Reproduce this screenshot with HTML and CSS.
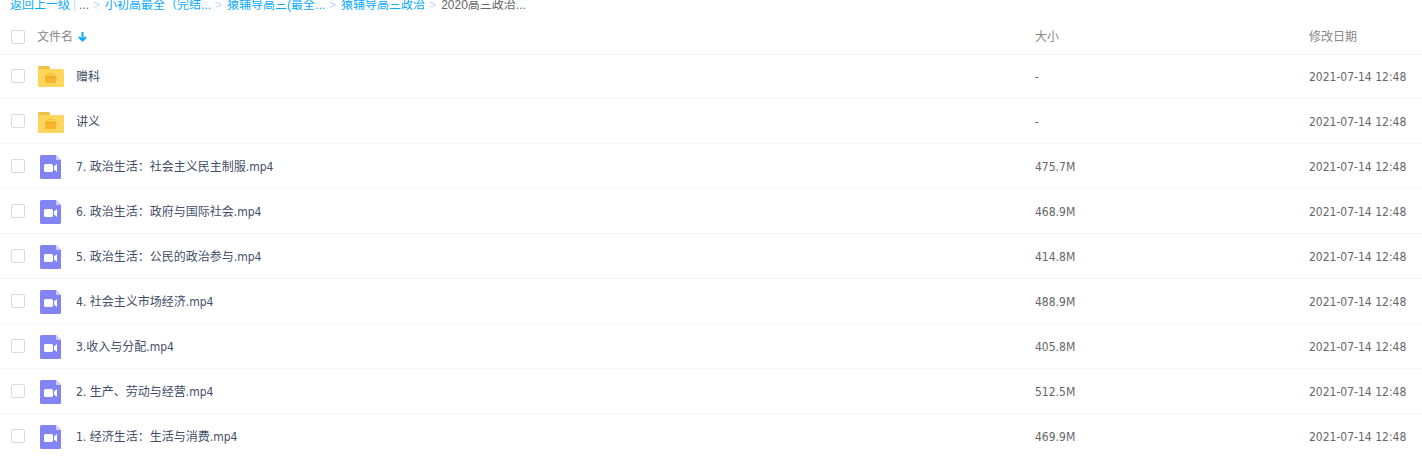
FILE: index.html
```html
<!DOCTYPE html>
<html lang="zh-CN">
<head>
    <meta charset="UTF-8">
    <meta name="viewport" content="width=device-width, initial-scale=1.0">
    <title>2020高三政治</title>
    <link rel="stylesheet" href="styles.css">
</head>
<body>
    <!-- Icon shapes shared by the rows -->
    <svg class="icon-defs" width="0" height="0" aria-hidden="true">
        <symbol id="icon-folder" viewBox="0 0 26 21">
            <path fill="#eebe47" d="M0 1.5Q0 0 1.5 0H10.5Q12 0 12 1.5V5H0z"/>
            <path fill="#ffd65c" d="M0 3H24.5Q26 3 26 4.5V19.5Q26 21 24.5 21H1.5Q0 21 0 19.5z"/>
            <path fill="none" stroke="#f6b62e" d="M9.5 9.500V8.500Q9.500 7.500 10.500 7.500H14.500Q15.500 7.500 15.500 8.500V9.500"/>
            <path fill="#f6b62e" d="M7 10Q7 9 8 9H17Q18 9 18 10V11.200H20V12H18V16Q18 17 17 17H8Q7 17 7 16z"/>
            <path fill="#eaa41f" d="M7 11.300H18V12H7z"/>
        </symbol>
        <symbol id="icon-video" viewBox="0 0 21 24">
            <path fill="#8284f3" d="M1.500 0H16L21 5V22.500Q21 24 19.500 24H1.500Q0 24 0 22.500V1.500Q0 0 1.500 0z"/>
            <path fill="#cfd0fb" d="M16 0L21 5H17Q16 5 16 4z"/>
            <rect fill="#fff" x="4" y="9" width="9" height="8" rx="1.500"/>
            <path fill="#fff" d="M17 9V17L14 14.500V11.500z"/>
        </symbol>
    </svg>

    <!-- Breadcrumb -->
    <nav class="breadcrumb">
        <a class="back" href="#">返回上一级</a>
        <span class="divider">|</span>
        <span>...</span>
        <span class="arrow">&gt;</span>
        <a href="#">小初高最全（完结...</a>
        <span class="arrow">&gt;</span>
        <a href="#">猿辅导高三(最全...</a>
        <span class="arrow">&gt;</span>
        <a href="#">猿辅导高三政治</a>
        <span class="arrow">&gt;</span>
        <span>2020高三政治...</span>
    </nav>

    <!-- File list -->
    <table class="file-list">
        <thead>
            <tr>
                <th class="col-name">
                    <div class="name-cell">
                        <input type="checkbox" aria-label="全选">
                        <span class="sort">文件名
                            <svg width="9" height="10" viewBox="0 0 9 10" aria-hidden="true"><path fill="none" stroke="#09aaff" stroke-width="2" d="M4.500 0V8.500M1 5L4.500 8.500L8 5"/></svg>
                        </span>
                    </div>
                </th>
                <th class="col-size">大小</th>
                <th class="col-date">修改日期</th>
            </tr>
        </thead>
        <tbody>
            <tr>
                <td><div class="name-cell"><input type="checkbox" id="file-1"><svg class="file-icon" aria-hidden="true"><use href="#icon-folder"/></svg><label for="file-1">赠科</label></div></td>
                <td>-</td>
                <td>2021-07-14 12:48</td>
            </tr>
            <tr>
                <td><div class="name-cell"><input type="checkbox" id="file-2"><svg class="file-icon" aria-hidden="true"><use href="#icon-folder"/></svg><label for="file-2">讲义</label></div></td>
                <td>-</td>
                <td>2021-07-14 12:48</td>
            </tr>
            <tr>
                <td><div class="name-cell"><input type="checkbox" id="file-3"><svg class="file-icon video" aria-hidden="true"><use href="#icon-video"/></svg><label for="file-3">7. 政治生活：社会主义民主制服.mp4</label></div></td>
                <td>475.7M</td>
                <td>2021-07-14 12:48</td>
            </tr>
            <tr>
                <td><div class="name-cell"><input type="checkbox" id="file-4"><svg class="file-icon video" aria-hidden="true"><use href="#icon-video"/></svg><label for="file-4">6. 政治生活：政府与国际社会.mp4</label></div></td>
                <td>468.9M</td>
                <td>2021-07-14 12:48</td>
            </tr>
            <tr>
                <td><div class="name-cell"><input type="checkbox" id="file-5"><svg class="file-icon video" aria-hidden="true"><use href="#icon-video"/></svg><label for="file-5">5. 政治生活：公民的政治参与.mp4</label></div></td>
                <td>414.8M</td>
                <td>2021-07-14 12:48</td>
            </tr>
            <tr>
                <td><div class="name-cell"><input type="checkbox" id="file-6"><svg class="file-icon video" aria-hidden="true"><use href="#icon-video"/></svg><label for="file-6">4. 社会主义市场经济.mp4</label></div></td>
                <td>488.9M</td>
                <td>2021-07-14 12:48</td>
            </tr>
            <tr>
                <td><div class="name-cell"><input type="checkbox" id="file-7"><svg class="file-icon video" aria-hidden="true"><use href="#icon-video"/></svg><label for="file-7">3.收入与分配.mp4</label></div></td>
                <td>405.8M</td>
                <td>2021-07-14 12:48</td>
            </tr>
            <tr>
                <td><div class="name-cell"><input type="checkbox" id="file-8"><svg class="file-icon video" aria-hidden="true"><use href="#icon-video"/></svg><label for="file-8">2. 生产、劳动与经营.mp4</label></div></td>
                <td>512.5M</td>
                <td>2021-07-14 12:48</td>
            </tr>
            <tr>
                <td><div class="name-cell"><input type="checkbox" id="file-9"><svg class="file-icon video" aria-hidden="true"><use href="#icon-video"/></svg><label for="file-9">1. 经济生活：生活与消费.mp4</label></div></td>
                <td>469.9M</td>
                <td>2021-07-14 12:48</td>
            </tr>
        </tbody>
    </table>
</body>
</html>
```
FILE: styles.css
```css
/* Base Styles */
body {
    font-family: 'DejaVu Sans Condensed', 'Noto Sans', 'Noto Sans CJK SC', sans-serif;
    font-size: 12px;
    line-height: 18px;
    color: #666;
    background-color: #fff;
    margin: 0;
}

.icon-defs {
    display: block;
}

/* Breadcrumb */
.breadcrumb {
    display: flex;
    height: 18px;
    padding-left: 10px;
    font-family: 'Liberation Sans', 'Noto Sans CJK SC', sans-serif;
    line-height: 10px;
    white-space: nowrap;
}

.breadcrumb a {
    color: #09aaff;
    text-decoration: none;
}

.breadcrumb .divider {
    width: 3px;
    margin: 0 3px;
    color: #c4dbfe;
}

.breadcrumb .arrow {
    margin: 0 5px 0 4px;
    color: #c4dbfe;
}

/* File list */
.file-list {
    width: 100%;
    table-layout: fixed;
    border-collapse: separate;
    border-spacing: 0;
}

.file-list th,
.file-list td {
    box-sizing: border-box;
    height: 45px;
    padding: 2px 0 0;
    border-bottom: 1px solid #f2f6fd;
    text-align: left;
    vertical-align: middle;
    white-space: nowrap;
}

.file-list th {
    height: 36px;
    border-bottom: none;
    font-weight: normal;
    color: #888;
}

.file-list tbody tr:first-child td {
    padding-top: 0;
    border-top: 1px solid #f2f6fd;
}

.col-size {
    width: 274px;
}

.col-date {
    width: 113px;
}

/* Name column */
.name-cell {
    display: flex;
    align-items: center;
    padding-left: 11px;
}

.name-cell label {
    color: #424e67;
}

.sort {
    display: flex;
    align-items: center;
    gap: 5px;
    margin-left: 12px;
}

input[type="checkbox"] {
    appearance: none;
    flex: none;
    width: 14px;
    height: 14px;
    margin: 0;
    border: 1px solid #d5dae3;
    border-radius: 2px;
    background-color: #fff;
}

td input[type="checkbox"] {
    margin-bottom: 2px;
}

input[type="checkbox"]:checked {
    border-color: #09aaff;
    background-color: #09aaff;
}

.file-icon {
    flex: none;
    width: 26px;
    height: 21px;
    margin: 0 12px 0 13px;
}

.file-icon.video {
    width: 21px;
    height: 24px;
    margin: 0 15px;
}
```
